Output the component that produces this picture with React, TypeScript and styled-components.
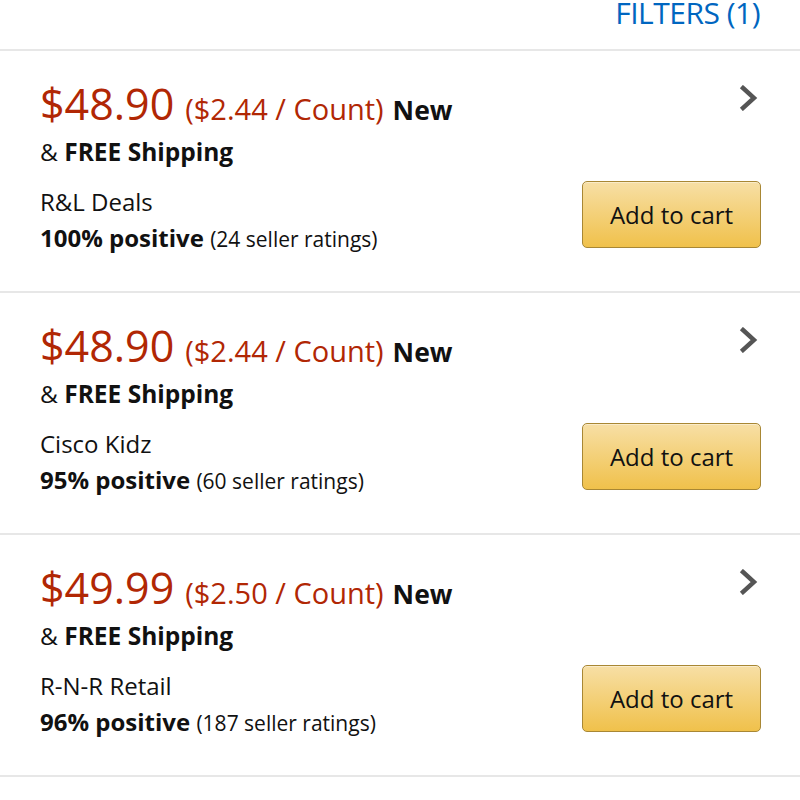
import React from "react";
import styled, { createGlobalStyle } from "styled-components";

const GlobalStyle = createGlobalStyle`
  html, body {
    margin: 0;
    padding: 0;
    background: #ffffff;
  }
  body {
    font-family: "Open Sans", "Noto Sans", Arial, sans-serif;
    color: #111111;
  }
`;

interface Offer {
  price: string;
  unit: string;
  seller: string;
  positive: string;
  ratings: string;
}

const offers: Offer[] = [
  { price: "$48.90", unit: "($2.44 / Count)", seller: "R&L Deals", positive: "100% positive", ratings: "(24 seller ratings)" },
  { price: "$48.90", unit: "($2.44 / Count)", seller: "Cisco Kidz", positive: "95% positive", ratings: "(60 seller ratings)" },
  { price: "$49.99", unit: "($2.50 / Count)", seller: "R-N-R Retail", positive: "96% positive", ratings: "(187 seller ratings)" },
];

function Chevron() {
  return (
    <ChevronSvg width="20" height="26" viewBox="0 0 20 26">
      <path d="M4 3 L15 13 L4 23" fill="none" stroke="#555555" strokeWidth="4.4" strokeLinecap="square" strokeLinejoin="miter" />
    </ChevronSvg>
  );
}

function OfferRow({ offer }: { offer: Offer }) {
  return (
    <Row>
      <Info>
        <PriceLine>
          <Price>{offer.price}</Price>
          <Unit>{offer.unit}</Unit>
          <Condition>New</Condition>
        </PriceLine>
        <Shipping>
          &amp; <b>FREE Shipping</b>
        </Shipping>
        <Seller>{offer.seller}</Seller>
        <Rating>
          <b>{offer.positive}</b> <small>{offer.ratings}</small>
        </Rating>
      </Info>
      <Actions>
        <Chevron />
        <CartButton>Add to cart</CartButton>
      </Actions>
    </Row>
  );
}

export default function App() {
  return (
    <Page>
      <GlobalStyle />
      <Header>
        <FilterLink>FILTERS (1)</FilterLink>
      </Header>
      {offers.map((o, i) => (
        <OfferRow key={i} offer={o} />
      ))}
    </Page>
  );
}

const Page = styled.div`
  width: 800px;
  background: #fff;
`;

const Header = styled.div`
  height: 49px;
  display: flex;
  justify-content: flex-end;
  align-items: flex-start;
  padding: 0 40px;
  border-bottom: 2px solid #e7e7e7;
`;

const FilterLink = styled.a`
  color: #0066c0;
  font-size: 30px;
  line-height: 26px;
  letter-spacing: -0.5px;
`;

const Row = styled.div`
  height: 242px;
  box-sizing: border-box;
  display: flex;
  justify-content: space-between;
  padding: 28px 39px 0 40px;
  border-bottom: 2px solid #e7e7e7;
`;

const Info = styled.div`
  display: flex;
  flex-direction: column;
`;

const PriceLine = styled.div`
  display: flex;
  align-items: baseline;
  height: 50px;
  line-height: 50px;
  white-space: nowrap;
`;

const Price = styled.span`
  color: #b12704;
  font-size: 43px;
  margin-right: 11px;
`;

const Unit = styled.span`
  color: #b12704;
  font-size: 29px;
  margin-right: 9px;
`;

const Condition = styled.span`
  font-size: 26.5px;
  font-weight: 700;
  color: #111;
`;

const Shipping = styled.div`
  font-size: 24.5px;
  line-height: 34px;
  margin-top: 6px;
`;

const Seller = styled.div`
  font-size: 24px;
  line-height: 34px;
  margin-top: 16px;
`;

const Rating = styled.div`
  font-size: 24px;
  line-height: 34px;
  margin-top: 2px;

  & small {
    font-size: 21px;
  }
`;

const Actions = styled.div`
  display: flex;
  flex-direction: column;
  align-items: flex-end;
`;

const ChevronSvg = styled.svg`
  margin-top: 6px;
  margin-right: 2px;
`;

const CartButton = styled.button`
  margin-top: 70px;
  width: 179px;
  height: 67px;
  border: 1px solid #a88734;
  border-radius: 5px;
  background: linear-gradient(to bottom, #f7dfa5, #f0c14b);
  box-shadow: inset 0 1px 0 rgba(255, 255, 255, 0.4);
  font-family: "Open Sans", "Noto Sans", Arial, sans-serif;
  font-size: 24px;
  color: #111;
  padding: 0;
`;
